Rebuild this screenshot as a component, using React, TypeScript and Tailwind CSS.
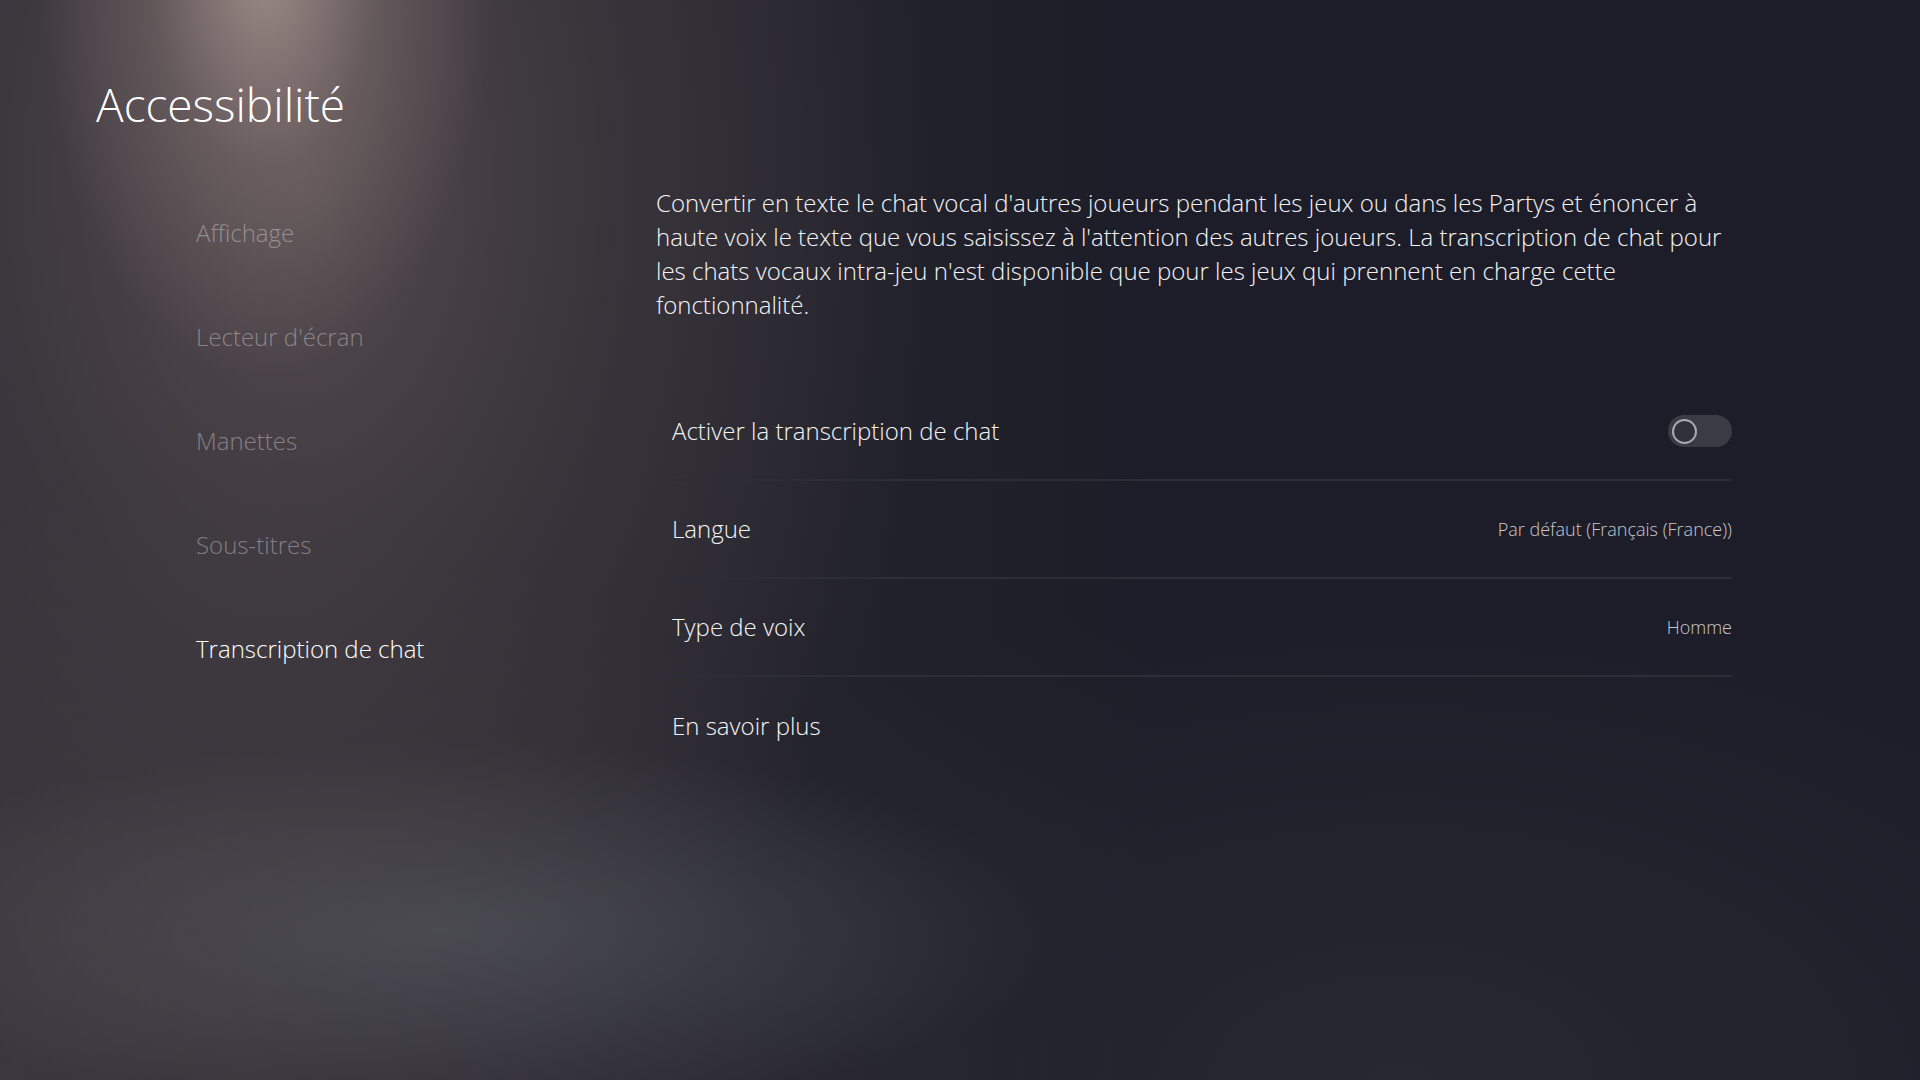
const menu = [
  { label: "Affichage", active: false },
  { label: "Lecteur d'écran", active: false },
  { label: "Manettes", active: false },
  { label: "Sous-titres", active: false },
  { label: "Transcription de chat", active: true },
];

function Toggle() {
  return (
    <div className="w-[64px] h-[32px] rounded-full bg-[#3a3b45] flex items-center pl-[4px]">
      <div className="w-[25px] h-[25px] rounded-full border-2 border-[#a9a9b1] bg-[#30313b]" />
    </div>
  );
}

function Row({ label, value, toggle, last }: { label: string; value?: string; toggle?: boolean; last?: boolean }) {
  return (
    <div className={`h-[98px] flex items-center justify-between ${last ? "" : "border-b-2 border-[#2c2d37]"}`}>
      <span className="text-[24px] font-light text-[#f4f4f6]">{label}</span>
      {toggle && <Toggle />}
      {value && <span className="text-[18px] font-light text-[#c9c9cf]">{value}</span>}
    </div>
  );
}

export default function App() {
  return (
    <div
      className="min-h-screen w-full overflow-hidden text-white bg-[#1c1d28] bg-[radial-gradient(ellipse_230px_420px_at_265px_-40px,rgba(185,165,158,0.75),rgba(150,130,128,0.35)_50%,transparent_100%),radial-gradient(ellipse_640px_1000px_at_300px_180px,rgba(112,98,98,0.6),rgba(90,80,82,0.33)_50%,transparent_100%),radial-gradient(ellipse_620px_190px_at_440px_930px,rgba(100,106,114,0.45),transparent),radial-gradient(ellipse_1000px_600px_at_0px_1080px,rgba(66,60,66,0.7),transparent),radial-gradient(ellipse_900px_500px_at_1400px_1080px,rgba(50,50,60,0.5),transparent),linear-gradient(to_right,#2c2a33_0%,#26252e_35%,#1c1d28_60%)]"
      style={{ fontFamily: '"Open Sans", "Noto Sans", sans-serif', height: 1080 }}
    >
      <div className="pt-[77px] pl-[96px]">
        <h1 className="text-[46px] leading-[55px] font-light text-white">Accessibilité</h1>
      </div>

      <div className="flex pl-[96px] mt-[49px]">
        {/* left menu */}
        <nav className="w-[560px] pl-[100px] flex flex-col">
          {menu.map((m) => (
            <div key={m.label} className="h-[104px] flex items-center">
              <span className={`text-[24px] font-light ${m.active ? "text-white" : "text-white/35"}`}>{m.label}</span>
            </div>
          ))}
        </nav>

        {/* right panel */}
        <main className="w-[1076px] pt-[5px]">
          <p className="text-[24px] leading-[34px] font-light text-[#f4f4f6]">
            Convertir en texte le chat vocal d'autres joueurs pendant les jeux ou dans les Partys et énoncer à haute voix le texte que vous saisissez à l'attention des autres joueurs. La transcription de chat pour les chats vocaux intra-jeu n'est disponible que pour les jeux qui prennent en charge cette fonctionnalité.
          </p>

          <div className="ml-[16px] mt-[61px]">
            <Row label="Activer la transcription de chat" toggle />
            <Row label="Langue" value="Par défaut (Français (France))" />
            <Row label="Type de voix" value="Homme" />
            <Row label="En savoir plus" last />
          </div>
        </main>
      </div>
    </div>
  );
}
